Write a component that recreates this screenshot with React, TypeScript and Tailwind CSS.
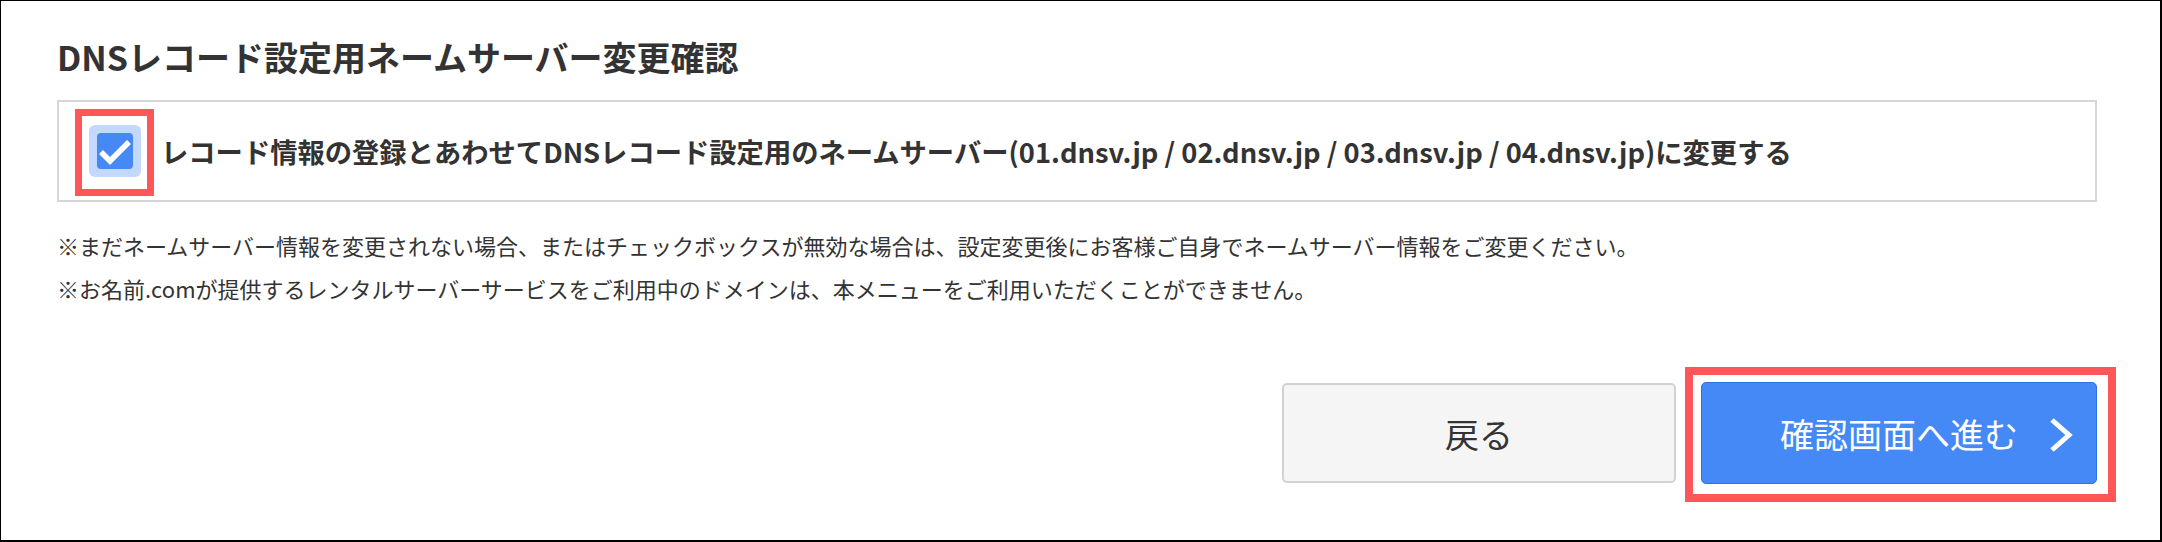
import React from 'react';

const font = { fontFamily: '"Noto Sans CJK JP", "Noto Sans", sans-serif' };

function CheckIcon() {
    return (
        <svg width="36" height="36" viewBox="0 0 36 36" className="block">
            <polyline points="4,19 13,28 32,9" fill="none" stroke="#ffffff" strokeWidth="5.5" strokeLinecap="butt" strokeLinejoin="miter" />
        </svg>
    );
}

export default function App() {
    return (
        <div
            className="w-[2162px] h-[542px] bg-white border-l border-t border-r-2 border-b-2 border-black pl-[56px] pr-[63px] pt-[36px] text-[#333333] overflow-hidden"
            style={font}
        >
            {/* Title */}
            <h1 className="text-[34px] leading-[40px] font-bold">DNSレコード設定用ネームサーバー変更確認</h1>

            {/* Checkbox row */}
            <div className="mt-[23px] h-[102px] border-2 border-[#d6d6d6] flex items-center pl-[30px]">
                <div className="relative w-[52px] h-[52px] rounded-[6px] bg-[#c2d8fd] flex items-center justify-center shrink-0">
                    <div className="w-[36px] h-[36px] rounded-[4px] bg-[#4688f4] flex items-center justify-center">
                        <CheckIcon />
                    </div>
                    <div className="absolute left-[-14px] top-[-16px] w-[79px] h-[87px] border-[7px] border-[#ff5659]" />
                </div>
                <span className="ml-[20px] text-[27.3px] leading-[32px] font-bold whitespace-nowrap">
                    レコード情報の登録とあわせてDNSレコード設定用のネームサーバー(01.dnsv.jp / 02.dnsv.jp / 03.dnsv.jp / 04.dnsv.jp)に変更する
                </span>
            </div>

            {/* Notes */}
            <div className="mt-[22px] text-[22px] leading-[43px]">
                <p>※まだネームサーバー情報を変更されない場合、またはチェックボックスが無効な場合は、設定変更後にお客様ご自身でネームサーバー情報をご変更ください。</p>
                <p>※お名前.comが提供するレンタルサーバーサービスをご利用中のドメインは、本メニューをご利用いただくことができません。</p>
            </div>

            {/* Buttons */}
            <div className="mt-[72px] flex justify-end items-center gap-[25px]">
                <button className="w-[394px] h-[100px] rounded-[5px] border-2 border-[#d2d2d2] bg-[#f5f5f5] text-[34px] text-[#333333] flex items-center justify-center">
                    戻る
                </button>
                <div className="relative">
                    <button className="relative w-[396px] h-[102px] rounded-[5px] border border-[#2a72e6] bg-[#4589f6] text-[34px] text-white flex items-center justify-center">
                        確認画面へ進む
                        <svg width="24" height="36" viewBox="0 0 24 36" className="absolute right-[23px] top-[34px]">
                            <polyline points="3,3 20,18 3,33" fill="none" stroke="#ffffff" strokeWidth="5" />
                        </svg>
                    </button>
                    <div className="absolute left-[-16px] top-[-15px] w-[431px] h-[135px] border-[8px] border-[#ff5659]" />
                </div>
            </div>
        </div>
    );
}
